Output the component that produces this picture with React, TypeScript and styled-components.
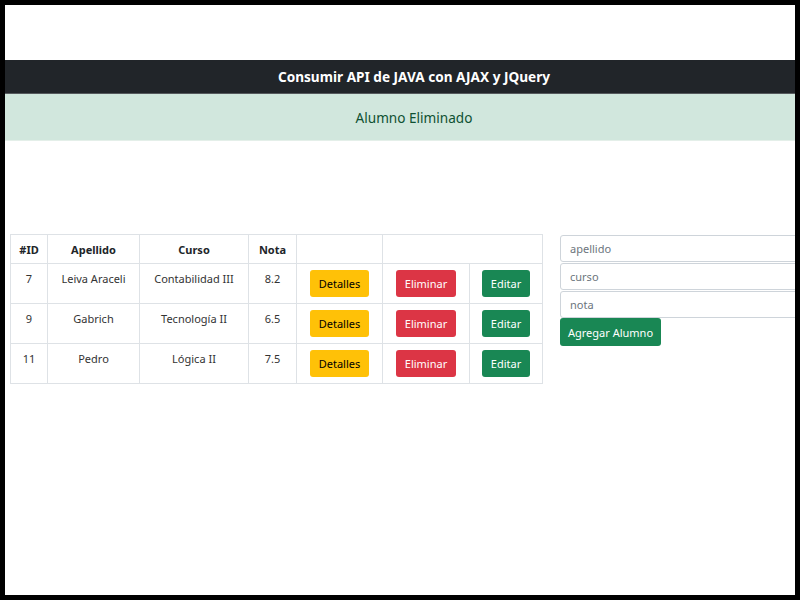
import styled, { createGlobalStyle } from "styled-components";

const GlobalStyle = createGlobalStyle`
  html, body {
    margin: 0;
    padding: 0;
    background: #000;
  }
  * {
    box-sizing: border-box;
  }
`;

type Alumno = {
  id: number;
  apellido: string;
  curso: string;
  nota: string;
};

const alumnos: Alumno[] = [
  { id: 7, apellido: "Leiva Araceli", curso: "Contabilidad III", nota: "8.2" },
  { id: 9, apellido: "Gabrich", curso: "Tecnología II", nota: "6.5" },
  { id: 11, apellido: "Pedro", curso: "Lógica II", nota: "7.5" },
];

const Frame = styled.div`
  width: 800px;
  height: 600px;
  border: 5px solid #000;
  background: #fff;
  overflow: hidden;
  padding-top: 55px;
  font-family: "Noto Sans", "Open Sans", sans-serif;
  color: #212529;
`;

const Navbar = styled.header`
  height: 34px;
  background: #212529;
  border-bottom: 1px solid #55595d;
  display: flex;
  align-items: center;
  justify-content: center;
  padding-left: 28px;
  color: #fff;
  font-weight: 700;
  font-size: 13.6px;
`;

const Alert = styled.div`
  height: 47px;
  background: #d1e7dd;
  border-bottom: 1px solid #e4efe9;
  color: #0f5132;
  display: flex;
  align-items: center;
  justify-content: center;
  padding-left: 28px;
  font-size: 13.6px;
`;

const Main = styled.main`
  display: flex;
  align-items: flex-start;
  gap: 17px;
  margin-top: 93px;
  padding-left: 5px;
`;

const Table = styled.table`
  width: 533px;
  border-collapse: collapse;
  font-size: 11px;
  flex-shrink: 0;
`;

const Th = styled.th<{ $w?: number }>`
  border: 1px solid #dee2e6;
  height: 29px;
  font-weight: 700;
  text-align: center;
  vertical-align: middle;
  padding: 0;
  width: ${(p) => (p.$w ? `${p.$w}px` : "auto")};
`;

const Td = styled.td`
  border: 1px solid #dee2e6;
  height: 40px;
  text-align: center;
  vertical-align: top;
  padding: 6px 0 0;
  line-height: 18px;
  color: #333;
`;

const variants = {
  warning: { bg: "#ffc107", fg: "#000" },
  danger: { bg: "#dc3545", fg: "#fff" },
  success: { bg: "#198754", fg: "#fff" },
};

const Button = styled.button<{ $variant: keyof typeof variants }>`
  display: inline-block;
  vertical-align: top;
  height: 27px;
  padding: 0 9px;
  border: none;
  border-radius: 3px;
  font-family: inherit;
  font-size: 11px;
  background: ${(p) => variants[p.$variant].bg};
  color: ${(p) => variants[p.$variant].fg};
`;

const Form = styled.form`
  width: 300px;
  flex-shrink: 0;
  display: flex;
  flex-direction: column;
  align-items: flex-start;
  padding-top: 1px;
`;

const Input = styled.input`
  width: 100%;
  height: 27px;
  margin: 0 0 1px;
  padding: 0 9px;
  border: 1px solid #ced4da;
  border-radius: 3px;
  font-family: inherit;
  font-size: 11px;
  color: #212529;
  &::placeholder {
    color: #6c757d;
  }
`;

const SubmitButton = styled(Button)`
  height: 28px;
  margin-top: -1px;
  padding: 0 8px;
  font-size: 11px;
`;

export default function App() {
  return (
    <>
      <GlobalStyle />
      <Frame>
        <Navbar>Consumir API de JAVA con AJAX y JQuery</Navbar>
        <Alert>Alumno Eliminado</Alert>
        <Main>
          <Table>
            <thead>
              <tr>
                <Th $w={37}>#ID</Th>
                <Th $w={92}>Apellido</Th>
                <Th $w={109}>Curso</Th>
                <Th $w={48}>Nota</Th>
                <Th $w={86}></Th>
                <Th colSpan={2}></Th>
              </tr>
            </thead>
            <tbody>
              {alumnos.map((a) => (
                <tr key={a.id}>
                  <Td>{a.id}</Td>
                  <Td>{a.apellido}</Td>
                  <Td>{a.curso}</Td>
                  <Td>{a.nota}</Td>
                  <Td>
                    <Button type="button" $variant="warning">Detalles</Button>
                  </Td>
                  <Td style={{ width: 87 }}>
                    <Button type="button" $variant="danger">Eliminar</Button>
                  </Td>
                  <Td>
                    <Button type="button" $variant="success">Editar</Button>
                  </Td>
                </tr>
              ))}
            </tbody>
          </Table>
          <Form onSubmit={(e) => e.preventDefault()}>
            <Input placeholder="apellido" />
            <Input placeholder="curso" />
            <Input placeholder="nota" />
            <SubmitButton type="submit" $variant="success">Agregar Alumno</SubmitButton>
          </Form>
        </Main>
      </Frame>
    </>
  );
}
